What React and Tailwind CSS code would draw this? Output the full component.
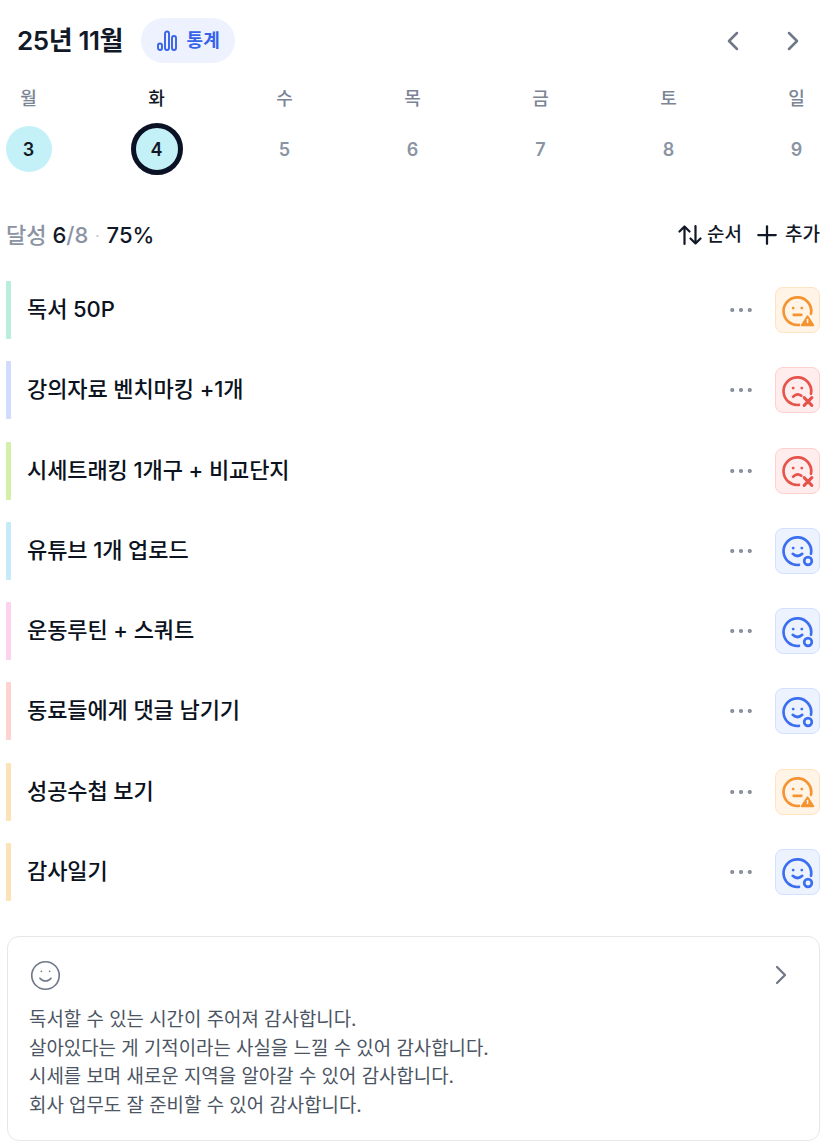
import React from 'react'
import { ChevronLeft, ChevronRight, Plus, Ellipsis, Smile } from 'lucide-react'

const fontStack = 'font-["Inter","Noto_Sans_CJK_KR",sans-serif]'

const days = [
  { label: '월', date: 3, done: true },
  { label: '화', date: 4, done: true, today: true },
  { label: '수', date: 5 },
  { label: '목', date: 6 },
  { label: '금', date: 7 },
  { label: '토', date: 8 },
  { label: '일', date: 9 },
]

const tasks = [
  { title: '독서 50P', bar: 'bg-[#b9eedb]', status: 'warn' },
  { title: '강의자료 벤치마킹 +1개', bar: 'bg-[#cfdcfb]', status: 'fail' },
  { title: '시세트래킹 1개구 + 비교단지', bar: 'bg-[#d3f0a8]', status: 'fail' },
  { title: '유튜브 1개 업로드', bar: 'bg-[#c5ebfb]', status: 'ok' },
  { title: '운동루틴 + 스쿼트', bar: 'bg-[#fbd3ef]', status: 'ok' },
  { title: '동료들에게 댓글 남기기', bar: 'bg-[#fdd2cf]', status: 'ok' },
  { title: '성공수첩 보기', bar: 'bg-[#fde2b8]', status: 'warn' },
  { title: '감사일기', bar: 'bg-[#fde2b8]', status: 'ok' },
]

const notes = [
  '독서할 수 있는 시간이 주어져 감사합니다.',
  '살아있다는 게 기적이라는 사실을 느낄 수 있어 감사합니다.',
  '시세를 보며 새로운 지역을 알아갈 수 있어 감사합니다.',
  '회사 업무도 잘 준비할 수 있어 감사합니다.',
]

const statusBox = {
  ok: 'bg-[#edf2ff] border-[#d5e0ff] text-[#3b6ff0]',
  warn: 'bg-[#fff4e6] border-[#ffe3c2] text-[#f59331]',
  fail: 'bg-[#ffecec] border-[#ffd0cd] text-[#e5534b]',
}

// face with the lower right of the ring left open for the little badge
function StatusFace({ status }) {
  return (
    <svg width="45" height="45" viewBox="0 0 45 45" fill="none" stroke="currentColor" strokeWidth="2.8" strokeLinecap="round" strokeLinejoin="round">
      <path d="M36.6 26 A14.5 14.5 0 1 0 24 37.6" />
      <circle cx="18" cy="20" r="1.5" fill="currentColor" stroke="none" />
      <circle cx="27" cy="20" r="1.5" fill="currentColor" stroke="none" />
      {status === 'ok' && <path d="M17.5 26 Q22.5 30.5 27.5 26" />}
      {status === 'ok' && <circle cx="33.5" cy="33.5" r="4" fill="#edf2ff" strokeWidth="2.8" />}
      {status === 'warn' && <path d="M18.5 27 H26.5" />}
      {status === 'warn' && (
        <>
          <path d="M33 28.5 L39 38 H27 Z" fill="currentColor" strokeWidth="2" />
          <path d="M33 32 V35" stroke="#fff4e6" strokeWidth="1.6" />
        </>
      )}
      {status === 'fail' && <path d="M18 29 Q22 24.5 26.5 28" />}
      {status === 'fail' && <path d="M29.5 30 L37.5 38 M37.5 30 L29.5 38" strokeWidth="3.2" />}
    </svg>
  )
}

// three bars going up, stats pill
function BarsIcon() {
  return (
    <svg width="20" height="21" viewBox="0 0 20 21" fill="none" stroke="currentColor" strokeWidth="1.9">
      <rect x="1" y="13.5" width="4" height="6.5" rx="2" />
      <rect x="8" y="1.5" width="4" height="18.5" rx="2" />
      <rect x="15" y="6" width="4" height="14" rx="2" />
    </svg>
  )
}

function SortIcon() {
  return (
    <svg width="24" height="22" viewBox="0 0 24 22" fill="none" stroke="currentColor" strokeWidth="2.2" strokeLinecap="round" strokeLinejoin="round">
      <path d="M6.5 20 V2.5 M1.5 7.5 L6.5 2.5 L11.5 7.5" />
      <path d="M17.5 2 V19.5 M12.5 14.5 L17.5 19.5 L22.5 14.5" />
    </svg>
  )
}

export default function App() {
  return (
    <div className={`${fontStack} w-[827px] h-[1141px] bg-white overflow-hidden text-[#111827]`}>
      {/* Month header */}
      <div className="flex items-center h-[45px] mt-[18px] pl-[17px] pr-[18px]">
        <h1 className="text-[26px] font-semibold tracking-[-0.4px]">25년 11월</h1>
        <button className="ml-[18px] h-[45px] w-[94px] flex items-center justify-center gap-[10px] rounded-full bg-[#eef2ff] text-[#3563e9] text-[18px] font-semibold">
          <BarsIcon />
          통계
        </button>
        <div className="ml-auto flex items-center gap-[27px] text-[#6f7889]">
          <ChevronLeft size={32} strokeWidth={1.9} className="-translate-x-[1px]" />
          <ChevronRight size={32} strokeWidth={1.9} />
        </div>
      </div>

      {/* Week strip */}
      <div className="flex justify-between pl-[5.5px] pr-[7.5px] mt-[21px]">
        {days.map(d => (
          <div key={d.date} className="w-[46px] flex flex-col items-center">
            <span className={`h-[28px] leading-[30px] text-[18px] font-medium ${d.today ? 'text-[#111827]' : 'text-[#7b8494]'}`}>{d.label}</span>
            <div className={`mt-[14px] w-[46px] h-[46px] rounded-full flex items-center justify-center text-[18px] font-semibold
              ${d.done ? 'bg-[#c4f1f7] text-[#111827]' : 'text-[#8b94a3]'}
              ${d.today ? 'outline-[5px] outline-[#0b1226] -outline-offset-2' : ''}`}>
              {d.date}
            </div>
          </div>
        ))}
      </div>

      {/* Progress + actions */}
      <div className="flex items-center justify-between h-[30px] mt-[48px] pl-[6px] pr-[7px]">
        <div className="text-[22px] font-medium text-[#8b94a3] flex items-center">
          달성<span className="ml-[6px] text-[#111827]">6</span>/8
          <span className="mx-[7px] text-[14px] text-[#c3c8d1]">·</span>
          <span className="text-[#111827]">75%</span>
        </div>
        <div className="flex items-center text-[19px] font-medium">
          <SortIcon />
          <span className="ml-[5px]">순서</span>
          <Plus size={30} strokeWidth={1.8} className="ml-[10px] -mr-[6px]" />
          <span className="ml-[9px]">추가</span>
        </div>
      </div>

      {/* Tasks */}
      <div className="flex flex-col gap-[22.3px] mt-[31px] pl-[6px] pr-[7px]">
        {tasks.map(t => (
          <div key={t.title} className="flex items-center h-[58px]">
            <div className={`w-[5px] h-full rounded-[1px] ${t.bar}`} />
            <span className="ml-[16px] -mt-[1px] text-[22px] font-medium tracking-[-0.1px] text-[#0b1220]">{t.title}</span>
            <Ellipsis size={30} strokeWidth={1.3} className="ml-auto text-[#7d8592]" />
            <div className={`ml-[19px] w-[45px] h-[46px] rounded-[8px] border flex items-center justify-center ${statusBox[t.status]}`}>
              <StatusFace status={t.status} />
            </div>
          </div>
        ))}
      </div>

      {/* Gratitude note */}
      <div className="mt-[35px] ml-[7px] mr-[7px] h-[205px] rounded-[12px] border border-[#e5e7eb] pl-[21px] pr-[22px] pt-[23px]">
        <div className="flex items-center justify-between h-[30px]">
          <Smile size={33} strokeWidth={1.2} className="text-[#6f7889]" />
          <ChevronRight size={32} strokeWidth={1.7} className="text-[#6f7889]" />
        </div>
        <div className="mt-[16px] text-[18.9px] leading-[28.7px] text-[#4b5563]">
          {notes.map(n => <p key={n}>{n}</p>)}
        </div>
      </div>
    </div>
  )
}
